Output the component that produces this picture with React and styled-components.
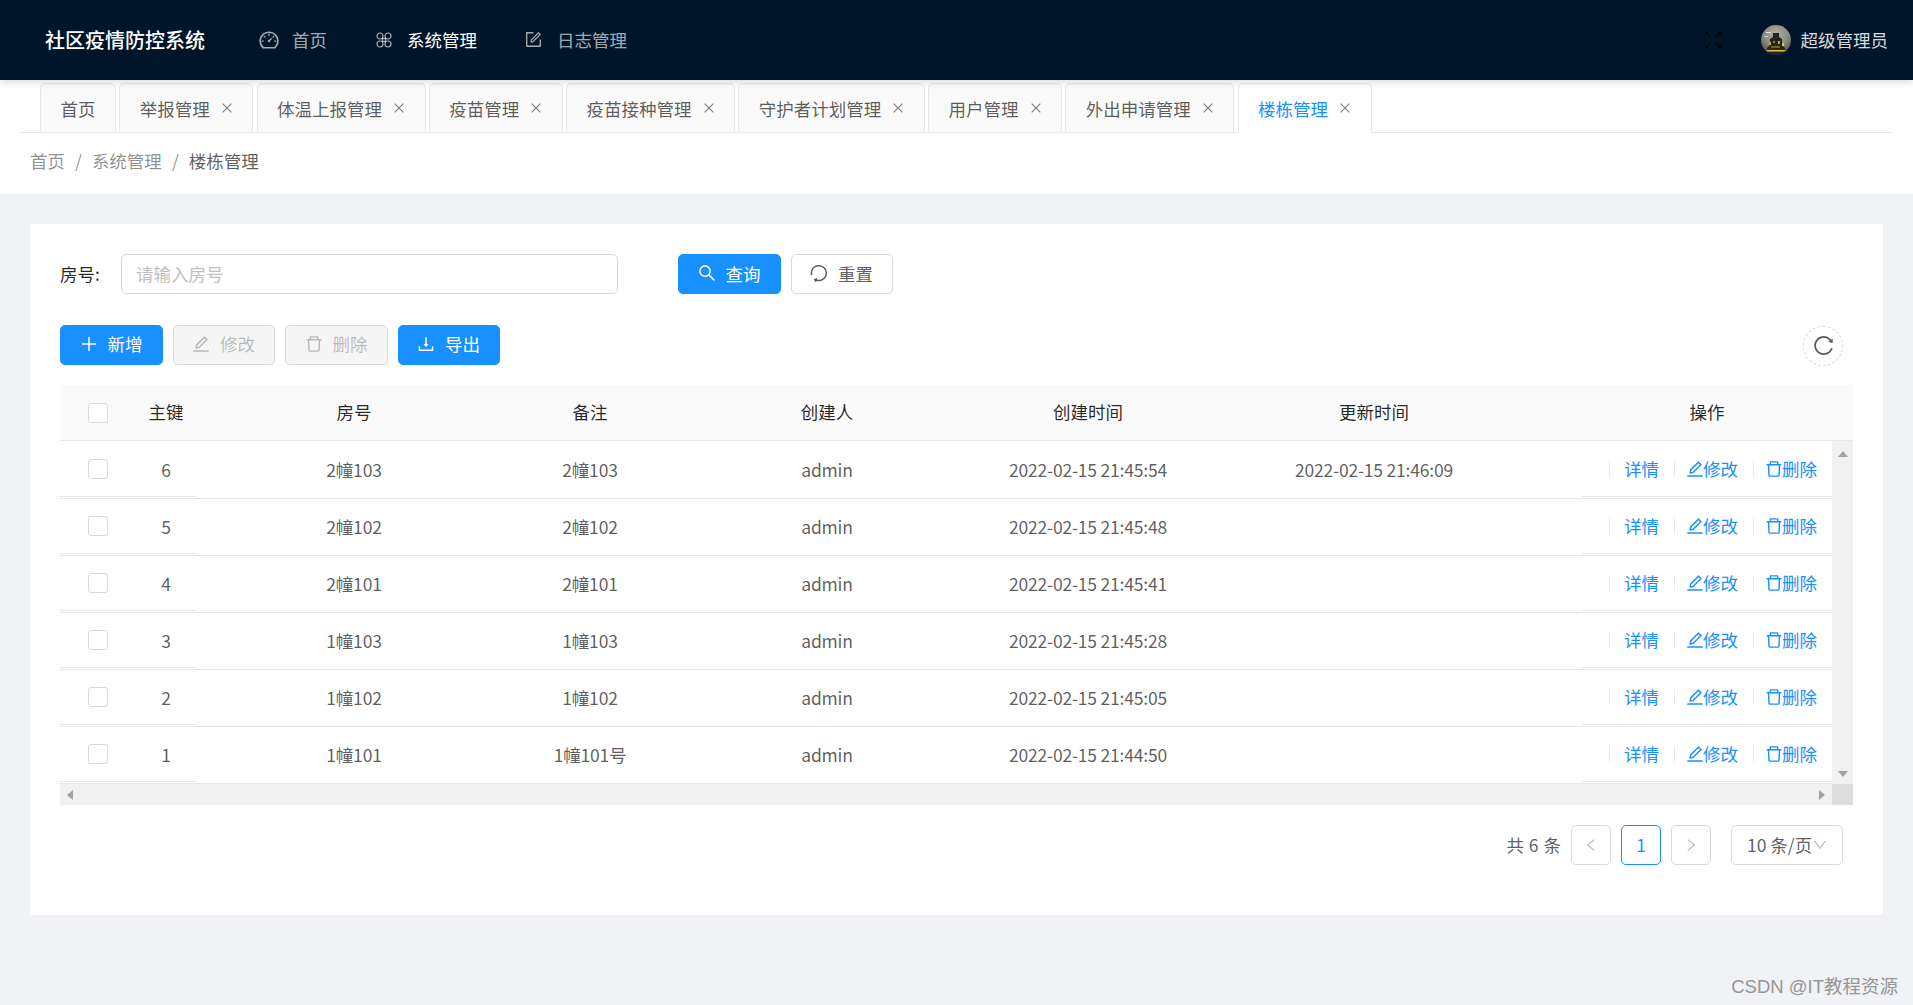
import React from "react";
import styled, { createGlobalStyle } from "styled-components";
import {
  AiOutlineDashboard,
  AiOutlineForm,
  AiOutlineFullscreen,
  AiOutlineClose,
  AiOutlineSearch,
  AiOutlineReload,
  AiOutlinePlus,
  AiOutlineEdit,
  AiOutlineDelete,
  AiOutlineDownload,
  AiOutlineLeft,
  AiOutlineRight,
  AiOutlineDown,
} from "react-icons/ai";

const GlobalStyle = createGlobalStyle`
  html, body {
    margin: 0;
    padding: 0;
    background: #f0f2f5;
    font-family: "Noto Sans CJK SC", "Noto Sans", sans-serif;
    font-size: 17.5px;
    color: rgba(0, 0, 0, 0.65);
    overflow: hidden;
  }
  * { box-sizing: border-box; }
`;

const Page = styled.div`
  min-height: 1005px;
  position: relative;
`;

/* top bar */
const Header = styled.header`
  height: 80px;
  background: #001529;
  display: flex;
  align-items: center;
  padding: 0 25px 1px 45px;
  box-shadow: 0 2px 8px rgba(0, 0, 0, 0.15);
  position: relative;
`;

const Title = styled.div`
  color: #fff;
  font-size: 20px;
  font-weight: 500;
  margin-right: 31px;
`;

const NavItem = styled.div`
  display: flex;
  align-items: center;
  padding: 0 24px;
  color: ${(p) => (p.$active ? "#fff" : "rgba(255,255,255,0.65)")};
`;

const NavIcon = styled.span`
  width: 17.5px;
  margin-right: 14.5px;
  display: flex;
  align-items: center;
  justify-content: center;
  color: rgba(255, 255, 255, 0.65);
  svg {
    flex: none;
  }
`;

const HeaderRight = styled.div`
  margin-left: auto;
  display: flex;
  align-items: center;
`;

const FullscreenBtn = styled.span`
  display: flex;
  color: rgba(0, 0, 0, 0.65);
  margin-right: 36px;
`;

const UserName = styled.span`
  color: rgba(255, 255, 255, 0.85);
  margin-left: 10px;
`;

/* tab strip */
const TabStrip = styled.div`
  background: #fff;
`;

const TabBar = styled.div`
  display: flex;
  gap: 3.25px;
  margin: 0 20px;
  padding: 3px 0 0 20px;
  height: 53px;
  border-bottom: 1px solid #e8e8e8;
`;

const Tab = styled.div`
  height: 50px;
  display: flex;
  align-items: center;
  padding: 0 19.5px;
  border: 1px solid #e8e8e8;
  border-radius: 5px 5px 0 0;
  background: ${(p) => (p.$active ? "#fff" : "#fafafa")};
  border-bottom-color: ${(p) => (p.$active ? "#fff" : "#e8e8e8")};
  color: ${(p) => (p.$active ? "#1890ff" : "rgba(0,0,0,0.65)")};
  svg {
    margin-left: 10px;
    margin-right: -1px;
    color: rgba(0, 0, 0, 0.5);
  }
`;

const Crumbs = styled.nav`
  height: 61px;
  background: #fff;
  display: flex;
  align-items: center;
  padding: 0 30px 7px;
  color: rgba(0, 0, 0, 0.45);
`;

const CrumbSep = styled.span`
  margin: 0 10px;
`;

const CrumbCurrent = styled.span`
  color: rgba(0, 0, 0, 0.65);
`;

/* content card */
const Card = styled.main`
  margin: 30px;
  background: #fff;
  padding: 30px 30px 50px;
`;

const SearchRow = styled.div`
  display: flex;
  align-items: center;
  height: 40px;
  margin-bottom: 30px;
`;

const Label = styled.label`
  width: 61px;
  padding-bottom: 2px;
  color: rgba(0, 0, 0, 0.85);
`;

const Input = styled.input`
  width: 497px;
  height: 40px;
  border: 1px solid #d9d9d9;
  border-radius: 5px;
  padding: 0 14px 2px;
  font: inherit;
  margin-right: 60px;
  outline: none;
  &::placeholder { color: #bfbfbf; opacity: 1; }
`;

const Button = styled.button`
  height: 40px;
  padding: 0 19px 2px;
  display: inline-flex;
  align-items: center;
  gap: 10px;
  font: inherit;
  border-radius: 5px;
  border: 1px solid ${(p) => (p.$primary ? "#1890ff" : "#d9d9d9")};
  background: ${(p) => (p.$primary ? "#1890ff" : p.disabled ? "#f5f5f5" : "#fff")};
  color: ${(p) => (p.$primary ? "#fff" : p.disabled ? "rgba(0,0,0,0.25)" : "rgba(0,0,0,0.65)")};
  box-shadow: 0 2px 0 rgba(0, 0, 0, 0.015);
  svg {
    margin: 0 -1.25px;
    flex: none;
  }
`;

const ResetIcon = styled(AiOutlineReload)`
  transform: rotate(145deg);
`;

const ButtonGroup = styled.div`
  display: flex;
  gap: 10px;
`;

const Toolbar = styled.div`
  display: flex;
  align-items: center;
  justify-content: space-between;
  height: 41px;
  margin-bottom: 20px;
  padding-right: 10px;
`;

const RefreshBtn = styled.span`
  width: 40px;
  height: 40px;
  border-radius: 50%;
  border: 1px dashed #d9d9d9;
  display: flex;
  align-items: center;
  justify-content: center;
  color: rgba(0, 0, 0, 0.65);
  margin-top: 2px;
`;

/* table */
const tracks = "76px 60px 316px 156px 318px 204px 392px 250px";

const TableWrap = styled.div`
  width: 1793px;
`;

const HeadRow = styled.div`
  display: grid;
  grid-template-columns: ${tracks} 21px;
  height: 56px;
  background: #fafafa;
  border-bottom: 1px solid #e8e8e8;
  color: rgba(0, 0, 0, 0.85);
`;

const HeadCell = styled.div`
  display: flex;
  align-items: center;
  justify-content: center;
  padding: 0 ${(p) => (p.$shift ? "24px" : "0")} ${(p) => (p.$flat ? "0" : "2px")} 0;
`;

const BodyArea = styled.div`
  display: flex;
`;

const Rows = styled.div`
  width: 1772px;
  padding-top: 1px;
`;

const Row = styled.div`
  display: grid;
  grid-template-columns: ${tracks};
  height: 57px;
  border-bottom: 1px solid #e8e8e8;
  letter-spacing: -0.2px;
`;

const Cell = styled.div`
  display: flex;
  align-items: center;
  justify-content: center;
  padding: 0 ${(p) => (p.$shift ? "24px" : "0")} 2px 0;
`;

const FixedCell = styled.div`
  display: flex;
  align-items: center;
  justify-content: center;
  background: #fff;
  margin-bottom: 1px;
  border-bottom: 1px solid #e8e8e8;
`;

const ActionCell = styled(FixedCell)`
  justify-content: flex-end;
  padding: 0 15px 1px 0;
  color: #1890ff;
  letter-spacing: 0;
`;

const ActionLink = styled.span`
  display: inline-flex;
  align-items: center;
  svg {
    margin: 0 -1.5px;
  }
`;

const ActionDivider = styled.i`
  width: 1px;
  height: 16px;
  background: #e8e8e8;
  margin: 0 11px 0 15px;
`;

const DetailLink = styled.span`
  margin-left: 3px;
`;

const Check = styled.span`
  width: 20px;
  height: 20px;
  border: 1px solid #d9d9d9;
  border-radius: 3px;
  background: #fff;
  display: block;
`;

const VScroll = styled.div`
  width: 21px;
  background: #f1f1f1;
  display: flex;
  flex-direction: column;
  align-items: center;
  justify-content: space-between;
  padding: 10px 0 7px;
`;

const HScrollRow = styled.div`
  display: flex;
  height: 21px;
`;

const HScroll = styled.div`
  flex: 1;
  background: #f1f1f1;
  display: flex;
  align-items: center;
  justify-content: space-between;
  padding: 0 7px;
`;

const ScrollCorner = styled.div`
  width: 21px;
  background: #dcdcdc;
`;

const Tri = styled.span`
  width: 0;
  height: 0;
  border: 5px solid transparent;
  ${(p) =>
    p.$dir === "up" && "border-bottom: 6px solid #a3a3a3; border-top-width: 0;"}
  ${(p) =>
    p.$dir === "down" && "border-top: 6px solid #a3a3a3; border-bottom-width: 0;"}
  ${(p) =>
    p.$dir === "left" && "border-right: 6px solid #a3a3a3; border-left-width: 0;"}
  ${(p) =>
    p.$dir === "right" && "border-left: 6px solid #a3a3a3; border-right-width: 0;"}
`;

/* pagination */
const Pager = styled.div`
  display: flex;
  justify-content: flex-end;
  align-items: center;
  gap: 10px;
  margin-top: 20px;
  padding-right: 10px;
  width: 1793px;
`;

const PageTotal = styled.span`
  word-spacing: 1px;
  padding-bottom: 2px;
`;

const PageBox = styled.span`
  width: 40px;
  height: 40px;
  padding-bottom: 1px;
  border: 1px solid ${(p) => (p.$active ? "#1890ff" : "#d9d9d9")};
  border-radius: 5px;
  display: flex;
  align-items: center;
  justify-content: center;
  color: ${(p) => (p.$active ? "#1890ff" : "rgba(0,0,0,0.25)")};
`;

const SizeSelect = styled.span`
  width: 112px;
  height: 40px;
  border: 1px solid #d9d9d9;
  border-radius: 5px;
  margin-left: 10px;
  padding: 0 0 1px 15px;
  display: flex;
  align-items: center;
  white-space: nowrap;
  svg {
    color: rgba(0, 0, 0, 0.25);
    flex: none;
  }
`;

const Watermark = styled.div`
  position: absolute;
  right: 15px;
  bottom: 7px;
  font-family: "Liberation Sans", "Noto Sans CJK SC", sans-serif;
  font-size: 18.5px;
  color: #969696;
`;

// four-loop menu icon, the icon packs only have a thinner one
const LoopsIcon = () => (
  <svg width="16" height="16" viewBox="0 0 16 16" fill="none" stroke="currentColor" strokeWidth="1.2">
    <circle cx="4" cy="4" r="3" />
    <circle cx="12" cy="4" r="3" />
    <circle cx="4" cy="12" r="3" />
    <circle cx="12" cy="12" r="3" />
    <rect x="6.5" y="6.5" width="3" height="3" />
  </svg>
);

// small drawing of the avatar photo (night building)
const Avatar = () => (
  <svg width="30" height="30" viewBox="0 0 30 30">
    <defs>
      <radialGradient id="sky" cx="0.5" cy="0.3" r="0.75">
        <stop offset="0" stopColor="#b0b0a6" />
        <stop offset="0.55" stopColor="#8a8a80" />
        <stop offset="1" stopColor="#46463f" />
      </radialGradient>
      <clipPath id="round">
        <circle cx="15" cy="15" r="15" />
      </clipPath>
    </defs>
    <g clipPath="url(#round)">
      <rect width="30" height="30" fill="url(#sky)" />
      <rect x="5" y="7" width="5" height="1" fill="#e4e4dc" />
      <rect x="3" y="11" width="4" height="1" fill="#d0d0c8" />
      <path d="M12 8h6v4l3 2v6l3 3v7H6v-7l3-3v-6l3-2z" fill="#26251b" />
      <rect x="8" y="17" width="2" height="3" fill="#b8a83c" />
      <rect x="12" y="16" width="2" height="2" fill="#8e8230" />
      <rect x="17" y="16" width="2" height="3" fill="#b8a83c" />
      <rect x="21" y="18" width="2" height="3" fill="#d6c84a" />
      <rect x="10" y="21" width="9" height="2" fill="#6e6628" />
      <rect x="6" y="25" width="18" height="1.5" fill="#d6c84a" />
    </g>
  </svg>
);

const navItems = [
  { label: "首页", icon: <AiOutlineDashboard size={22} /> },
  { label: "系统管理", icon: <LoopsIcon />, active: true },
  { label: "日志管理", icon: <AiOutlineForm size={19} /> },
];

const tabs = [
  { label: "首页", bare: true },
  { label: "举报管理" },
  { label: "体温上报管理" },
  { label: "疫苗管理" },
  { label: "疫苗接种管理" },
  { label: "守护者计划管理" },
  { label: "用户管理" },
  { label: "外出申请管理" },
  { label: "楼栋管理", active: true },
];

const rows = [
  { id: 6, room: "2幢103", note: "2幢103", created: "2022-02-15 21:45:54", updated: "2022-02-15 21:46:09" },
  { id: 5, room: "2幢102", note: "2幢102", created: "2022-02-15 21:45:48" },
  { id: 4, room: "2幢101", note: "2幢101", created: "2022-02-15 21:45:41" },
  { id: 3, room: "1幢103", note: "1幢103", created: "2022-02-15 21:45:28" },
  { id: 2, room: "1幢102", note: "1幢102", created: "2022-02-15 21:45:05" },
  { id: 1, room: "1幢101", note: "1幢101号", created: "2022-02-15 21:44:50" },
];

const App = () => (
  <Page>
    <GlobalStyle />
    <Header>
      <Title>社区疫情防控系统</Title>
      {navItems.map((n) => (
        <NavItem key={n.label} $active={n.active}>
          <NavIcon>{n.icon}</NavIcon>
          {n.label}
        </NavItem>
      ))}
      <HeaderRight>
        <FullscreenBtn>
          <AiOutlineFullscreen size={24} />
        </FullscreenBtn>
        <Avatar />
        <UserName>超级管理员</UserName>
      </HeaderRight>
    </Header>

    <TabStrip>
      <TabBar>
        {tabs.map((t) => (
          <Tab key={t.label} $active={t.active}>
            {t.label}
            {!t.bare && <AiOutlineClose size={14} />}
          </Tab>
        ))}
      </TabBar>
      <Crumbs>
        首页
        <CrumbSep>/</CrumbSep>
        系统管理
        <CrumbSep>/</CrumbSep>
        <CrumbCurrent>楼栋管理</CrumbCurrent>
      </Crumbs>
    </TabStrip>

    <Card>
      <SearchRow>
        <Label>房号:</Label>
        <Input placeholder="请输入房号" />
        <ButtonGroup>
          <Button $primary>
            <AiOutlineSearch size={20} />
            查询
          </Button>
          <Button>
            <ResetIcon size={20} />
            重置
          </Button>
        </ButtonGroup>
      </SearchRow>

      <Toolbar>
        <ButtonGroup>
          <Button $primary>
            <AiOutlinePlus size={20} />
            新增
          </Button>
          <Button disabled>
            <AiOutlineEdit size={20} />
            修改
          </Button>
          <Button disabled>
            <AiOutlineDelete size={20} />
            删除
          </Button>
          <Button $primary>
            <AiOutlineDownload size={20} />
            导出
          </Button>
        </ButtonGroup>
        <RefreshBtn>
          <AiOutlineReload size={23} />
        </RefreshBtn>
      </Toolbar>

      <TableWrap>
        <HeadRow>
          <HeadCell $flat><Check /></HeadCell>
          <HeadCell>主键</HeadCell>
          <HeadCell>房号</HeadCell>
          <HeadCell>备注</HeadCell>
          <HeadCell>创建人</HeadCell>
          <HeadCell>创建时间</HeadCell>
          <HeadCell $shift>更新时间</HeadCell>
          <HeadCell>操作</HeadCell>
        </HeadRow>
        <BodyArea>
          <Rows>
            {rows.map((r) => (
              <Row key={r.id}>
                <FixedCell><Check /></FixedCell>
                <FixedCell>{r.id}</FixedCell>
                <Cell>{r.room}</Cell>
                <Cell>{r.note}</Cell>
                <Cell>admin</Cell>
                <Cell>{r.created}</Cell>
                <Cell $shift>{r.updated}</Cell>
                <ActionCell>
                  <ActionDivider />
                  <DetailLink>详情</DetailLink>
                  <ActionDivider />
                  <ActionLink><AiOutlineEdit size={20} />修改</ActionLink>
                  <ActionDivider />
                  <ActionLink><AiOutlineDelete size={20} />删除</ActionLink>
                </ActionCell>
              </Row>
            ))}
          </Rows>
          <VScroll>
            <Tri $dir="up" />
            <Tri $dir="down" />
          </VScroll>
        </BodyArea>
        <HScrollRow>
          <HScroll>
            <Tri $dir="left" />
            <Tri $dir="right" />
          </HScroll>
          <ScrollCorner />
        </HScrollRow>
      </TableWrap>

      <Pager>
        <PageTotal>共 6 条</PageTotal>
        <PageBox><AiOutlineLeft size={16} /></PageBox>
        <PageBox $active>1</PageBox>
        <PageBox><AiOutlineRight size={16} /></PageBox>
        <SizeSelect>
          10 条/页
          <AiOutlineDown size={16} />
        </SizeSelect>
      </Pager>
    </Card>

    <Watermark>CSDN @IT教程资源</Watermark>
  </Page>
);

export default App;
